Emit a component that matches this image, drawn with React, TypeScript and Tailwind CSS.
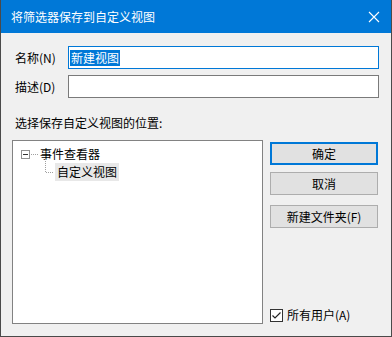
const FONT = "font-['Microsoft_YaHei_UI','Noto_Sans_CJK_SC',sans-serif]";

function TitleBar() {
  return (
    <div className="flex h-[33px] items-center justify-between bg-[#0078d7] pl-[10px] pr-[10px] text-white">
      <span className="text-[12px] leading-[16px]">将筛选器保存到自定义视图</span>
      <svg width="12" height="12" viewBox="0 0 12 12" className="mr-[1px]">
        <path d="M1 1L11 11M11 1L1 11" stroke="#fff" strokeWidth="1.1" />
      </svg>
    </div>
  );
}

function Field({ label, value, focused }: { label: string; value?: string; focused?: boolean }) {
  return (
    <div className="flex items-center">
      <span className="w-[56px] pl-[3px] text-[12px] leading-[16px]">{label}</span>
      <div
        className={
          focused
            ? "flex h-[23px] w-[311px] items-center border border-[#0078d7] bg-white pl-[1px]"
            : "flex h-[23px] w-[311px] items-center border border-[#7a7a7a] bg-white pl-[1px]"
        }
      >
        {value && <span className="bg-[#0078d7] px-[1px] text-[12px] leading-[16px] text-white">{value}</span>}
      </div>
    </div>
  );
}

function Button({ children, primary }: { children: string; primary?: boolean }) {
  return (
    <div
      className={
        primary
          ? "flex h-[23px] w-[108px] items-center justify-center border-2 border-[#0078d7] bg-[#e1e1e1] text-[12px]"
          : "flex h-[23px] w-[108px] items-center justify-center border border-[#adadad] bg-[#e1e1e1] text-[12px]"
      }
    >
      {children}
    </div>
  );
}

function Tree() {
  return (
    <div className="h-[184px] w-[251px] border border-[#828282] bg-white pt-[4px]">
      <div className="flex h-[18px] items-center pl-[8px]">
        <svg width="9" height="9" viewBox="0 0 9 9" className="shrink-0">
          <rect x="0.5" y="0.5" width="8" height="8" fill="#fff" stroke="#919191" />
          <path d="M2 4.5H7" stroke="#333" />
        </svg>
        <svg width="8" height="9" viewBox="0 0 8 9" className="shrink-0">
          <path d="M1 4.5H8" stroke="#a0a0a0" strokeDasharray="1 1" />
        </svg>
        <span className="ml-[2px] text-[12px] leading-[16px]">事件查看器</span>
      </div>
      <div className="flex h-[18px] items-center pl-[32px]">
        <svg width="10" height="18" viewBox="0 0 10 18" className="shrink-0 overflow-visible">
          <path d="M0.5 -4V9.5H9" stroke="#a0a0a0" strokeDasharray="1 1" fill="none" />
        </svg>
        <span className="bg-[#e8e8e8] px-[2px] text-[12px] leading-[18px]">自定义视图</span>
      </div>
    </div>
  );
}

export default function App() {
  return (
    <div className={`${FONT} h-[337px] w-[392px] overflow-hidden border-x border-b border-[#4a4a4a] bg-[#f0f0f0] text-black`}>
      <TitleBar />
      <div className="flex flex-col pl-[11px] pt-[13px]">
        <div className="flex flex-col gap-[6px]">
          <Field label="名称(N)" value="新建视图" focused />
          <Field label="描述(D)" />
        </div>
        <span className="mt-[17px] pl-[3px] text-[12px] leading-[16px]">选择保存自定义视图的位置:</span>
        <div className="mt-[9px] flex">
          <Tree />
          <div className="ml-[7px] flex flex-col pt-[2px]">
            <Button primary>确定</Button>
            <div className="mt-[7px]">
              <Button>取消</Button>
            </div>
            <div className="mt-[10px]">
              <Button>新建文件夹(F)</Button>
            </div>
            <div className="mt-[79px] flex items-center">
              <svg width="13" height="13" viewBox="0 0 13 13" className="shrink-0">
                <rect x="0.5" y="0.5" width="12" height="12" fill="#fff" stroke="#333" />
                <path d="M2.5 6.5L5 9L10.5 3.5" stroke="#222" strokeWidth="1.2" fill="none" />
              </svg>
              <span className="ml-[4px] text-[12px] leading-[16px]">所有用户(A)</span>
            </div>
          </div>
        </div>
      </div>
    </div>
  );
}
